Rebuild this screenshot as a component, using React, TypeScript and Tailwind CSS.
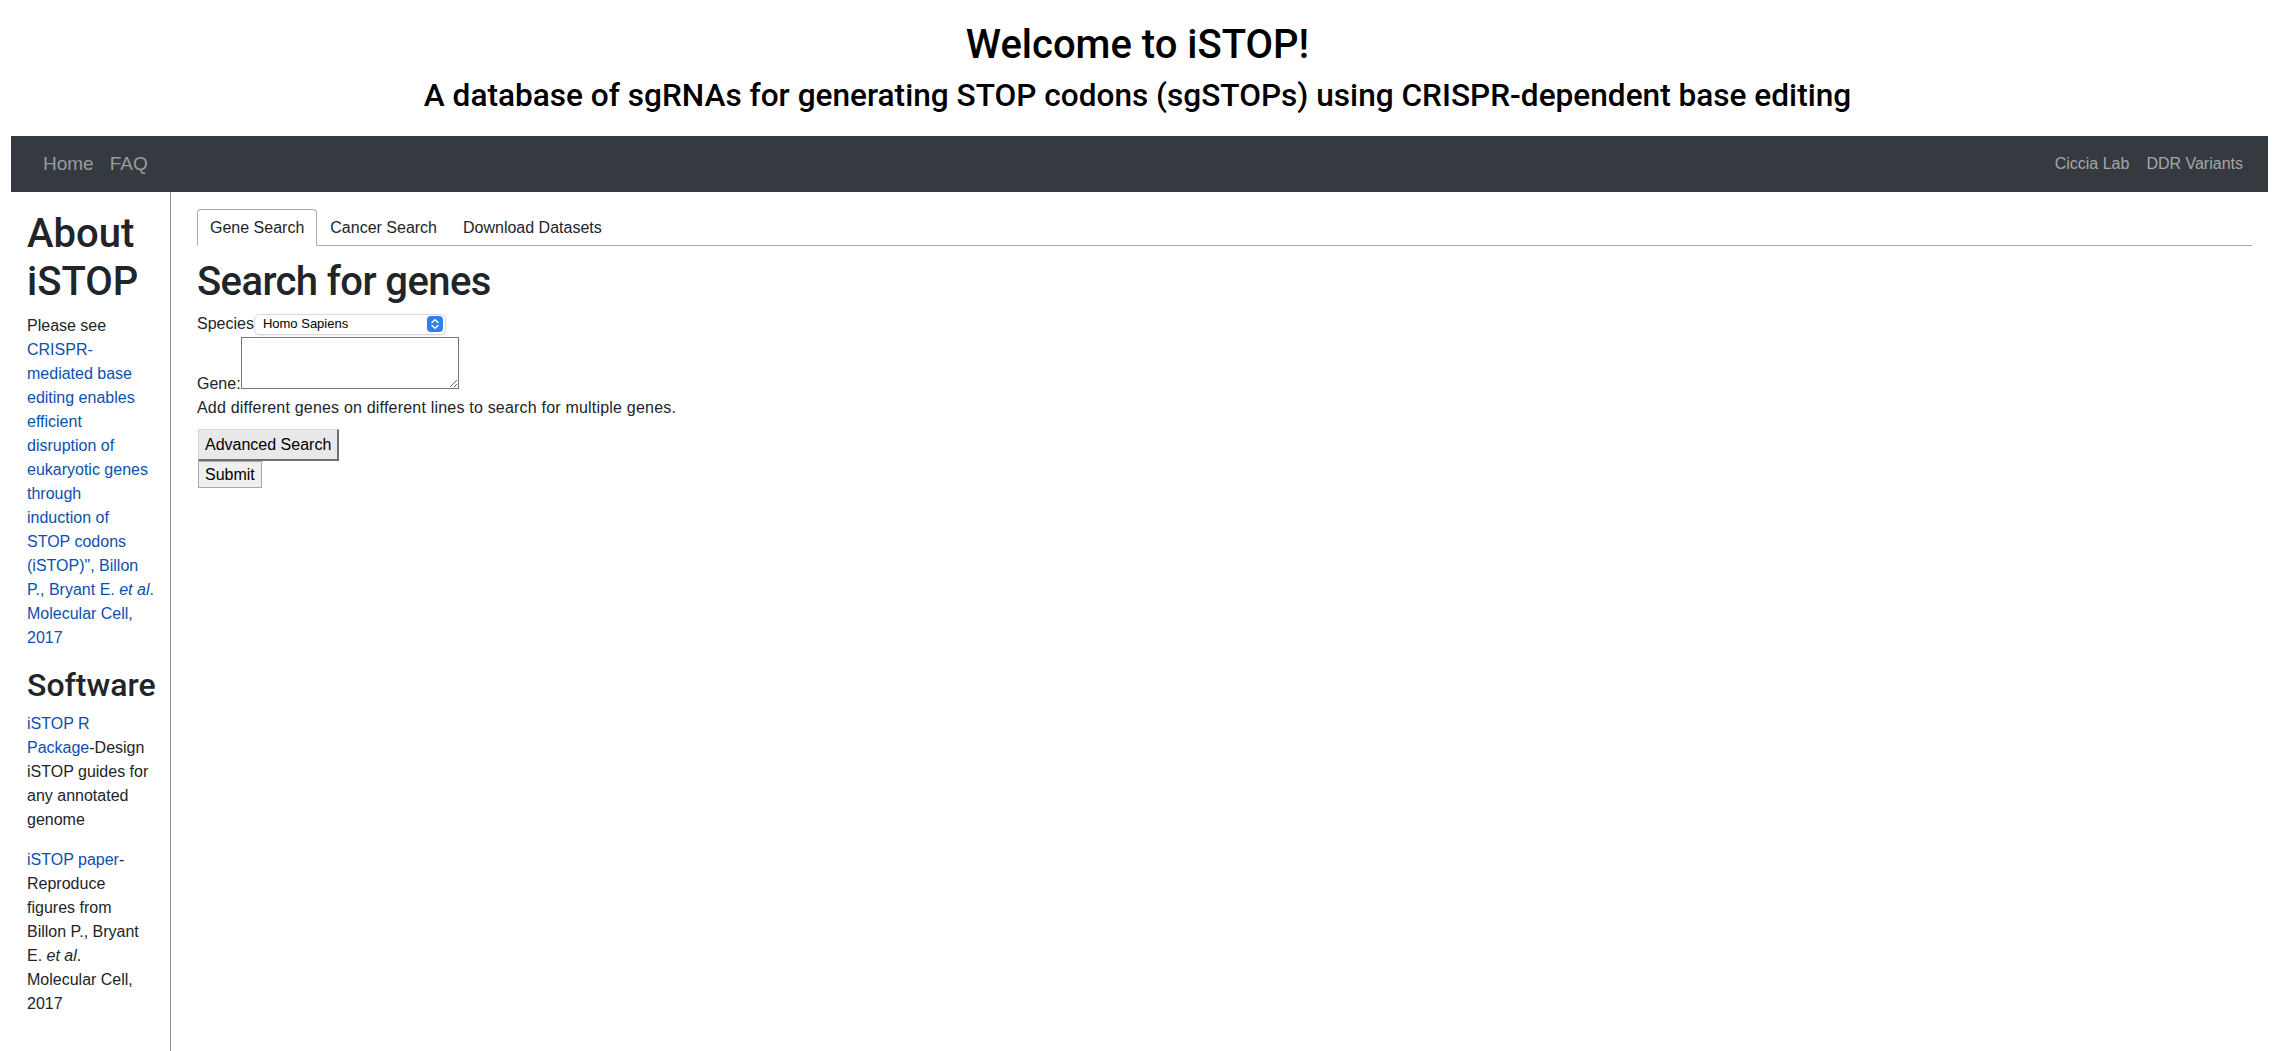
import React from "react";

function Stepper() {
  return (
    <svg width="16" height="16" viewBox="0 0 16 16" className="shrink-0">
      <rect x="0" y="0" width="16" height="16" rx="4" fill="#2f7ff0" />
      <path d="M5 6.5 L8 3.8 L11 6.5" fill="none" stroke="#fff" strokeWidth="1.5" strokeLinecap="round" strokeLinejoin="round" />
      <path d="M5 9.5 L8 12.2 L11 9.5" fill="none" stroke="#fff" strokeWidth="1.5" strokeLinecap="round" strokeLinejoin="round" />
    </svg>
  );
}

export default function App() {
  const link = "text-[#0b50b0]";
  return (
    <div className="min-h-screen bg-white font-['Liberation_Sans',Arial,sans-serif] text-[16px] leading-6 text-[#212529]">
      <header className="pt-[21px] text-center font-['Roboto','Liberation_Sans',sans-serif] font-medium text-black">
        <h1 className="text-[40px] leading-[48px]">Welcome to iSTOP!</h1>
        <h3 className="mt-[8px] text-[31.6px] leading-[38px]">
          A database of sgRNAs for generating STOP codons (sgSTOPs) using CRISPR-dependent base editing
        </h3>
      </header>

      <div className="mt-[21px] pl-[11px] pr-[7px]">
        <nav className="flex h-[56px] items-center justify-between bg-[#343a40] pl-[32px] pr-[25px]">
          <div className="flex gap-[16px] text-[19px] text-[#999c9f]">
            <a href="#">Home</a>
            <a href="#">FAQ</a>
          </div>
          <div className="flex gap-[17px] text-[16px] text-[#a4a7aa]">
            <a href="#">Ciccia Lab</a>
            <a href="#">DDR Variants</a>
          </div>
        </nav>

        <div className="flex min-h-[859px]">
          <aside className="w-[160px] shrink-0 border-r border-[#8c8c8c] pl-[16px] pr-[15px] pt-[18px]">
            <h1 className="mb-[8px] font-['Roboto','Liberation_Sans',sans-serif] text-[40px] font-medium leading-[48px]">
              About iSTOP
            </h1>
            <p className="mb-4">
              Please see{" "}
              <a href="#" className={link}>
                CRISPR-mediated base editing enables efficient disruption of eukaryotic genes through
                <br />
                induction of STOP codons (iSTOP)", Billon P., Bryant E. <i>et al</i>. Molecular Cell, 2017
              </a>
            </p>
            <h2 className="mb-[8px] font-['Roboto','Liberation_Sans',sans-serif] text-[32px] font-medium leading-[38px]">
              Software
            </h2>
            <p className="mb-4">
              <a href="#" className={link}>
                iSTOP R Package
              </a>
              -Design iSTOP guides for any annotated genome
            </p>
            <p className="mb-4">
              <a href="#" className={link}>
                iSTOP paper
              </a>
              -Reproduce figures from Billon P., Bryant E. <i>et al</i>. Molecular Cell, 2017
            </p>
          </aside>

          <main className="flex-1 pl-[26px] pr-[16px] pt-[17px]">
            <div className="flex border-b border-[#aaaaaa]">
              <button className="-mb-px rounded-t-[4px] border border-[#aaaaaa] border-b-white bg-white px-[12px] pt-[6px] pb-[5px] leading-6 text-[#212529]">
                Gene Search
              </button>
              <button className="-mb-px border border-transparent px-[12px] pt-[6px] pb-[5px] leading-6 text-[#212529]">
                Cancer Search
              </button>
              <button className="-mb-px border border-transparent px-[12px] pt-[6px] pb-[5px] leading-6 text-[#212529]">
                Download Datasets
              </button>
            </div>

            <h1 className="mt-[12px] mb-[6px] font-['Roboto','Liberation_Sans',sans-serif] text-[40px] font-medium leading-[48px] tracking-[-0.6px]">
              Search for genes
            </h1>

            <div className="flex h-6 items-center">
              <span>Species</span>
              <div className="flex h-[21px] w-[192px] items-center justify-between rounded-[5px] border border-[#d9d9d9] bg-white pl-[8px] pr-[2px] shadow-[0_1px_1px_rgba(0,0,0,0.06)]">
                <span className="text-[13px] leading-4 text-black">Homo Sapiens</span>
                <Stepper />
              </div>
            </div>

            <div className="flex items-end">
              <span className="leading-6">Gene:</span>
              <textarea className="mt-[1px] mb-[7px] h-[52px] w-[218px] resize border border-[#767676] bg-white" />
            </div>

            <div className="leading-6 tracking-[0.2px]">Add different genes on different lines to search for multiple genes.</div>

            <div className="mt-[9px] flex flex-col items-start">
              <button className="ml-px h-[32px] border-t border-l border-r-2 border-b-2 border-t-[#d6d6d6] border-l-[#d6d6d6] border-r-[#6f6f6f] border-b-[#6f6f6f] bg-[#e9e9e9] px-[6px] leading-[18px] text-black">
                Advanced Search
              </button>
              <button className="ml-px h-[27px] border border-[#a9a9a9] bg-[#efefef] px-[6px] leading-[18px] text-black">
                Submit
              </button>
            </div>
          </main>
        </div>
      </div>
    </div>
  );
}
